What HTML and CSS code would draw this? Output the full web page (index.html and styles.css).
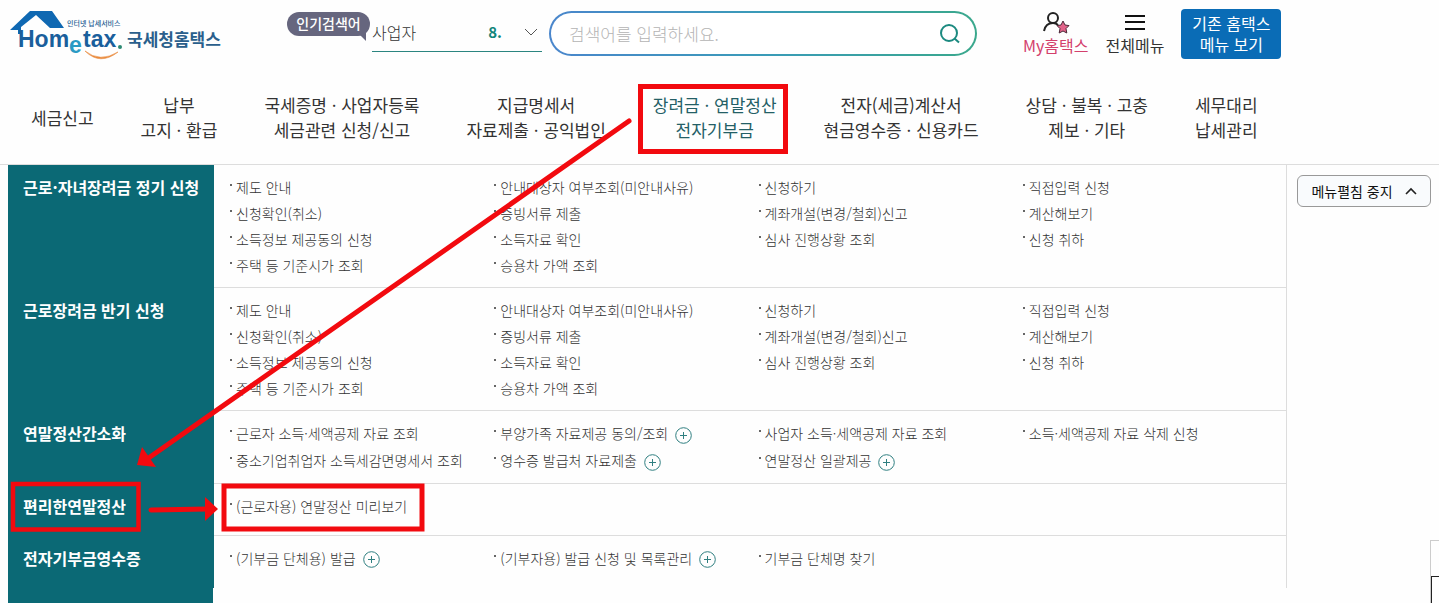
FILE: index.html
```
<!DOCTYPE html>
<html lang="ko">

<head>
  <meta charset="UTF-8" />
  <meta name="viewport" content="width=device-width, initial-scale=1.0" />
  <title>국세청 홈택스</title>
  <link rel="stylesheet" href="styles.css">
</head>

<body>
  <svg class="defs" width="0" height="0" aria-hidden="true">
    <symbol id="plus" viewBox="0 0 17 17">
      <circle cx="8.5" cy="8.5" r="7.8" fill="none" stroke="#2f7f80" />
      <path d="M5 8.5h7M8.5 5v7" fill="none" stroke="#2f7f80" />
    </symbol>
  </svg>

  <header class="header">
    <div class="top">
      <a href="#" class="logo" aria-label="Hometax 국세청홈택스">
        <svg width="212" height="54" viewBox="0 0 212 54">
          <path d="M1 21 L21 2 H43 L55 19 H41 L27 6 L12 18 V25 H9 V21 Z" fill="#0f68b2" />
          <text x="58" y="17" class="logo-sub">인터넷 납세서비스</text>
          <text x="9" y="38" class="logo-main">Hom</text>
          <text x="60" y="44" class="logo-main logo-e">e</text>
          <text x="74" y="38" class="logo-main">tax</text>
          <circle cx="111" cy="38" r="2" fill="#2c8a72" />
          <path d="M76 42 Q91 57 109 43 Q91 54 76 42 Z" fill="#e98a3c" stroke="#e98a3c" stroke-width=".6" />
          <text x="118" y="37" class="logo-kr">국세청홈택스</text>
        </svg>
      </a>
      <div class="keyword">
        <span class="keyword-badge">인기검색어</span>
        <button type="button" class="keyword-btn">
          <span>사업자</span>
          <span class="rank">8.</span>
          <svg width="14" height="8" viewBox="0 0 14 8"><path d="M1 1l6 6 6-6" fill="none" stroke="#555" /></svg>
        </button>
      </div>
      <form class="search">
        <input type="text" placeholder="검색어를 입력하세요." aria-label="검색어" />
        <button type="button" aria-label="검색">
          <svg width="22" height="22" viewBox="0 0 22 22" fill="none" stroke="#1c8a80" stroke-width="2">
            <circle cx="11" cy="10" r="8" /><path d="M16.5 15.5l4.500 4" />
          </svg>
        </button>
      </form>
      <div class="util">
        <a href="#" class="util-link my">
          <svg width="28" height="24" viewBox="0 0 28 24">
            <g fill="none" stroke="#222" stroke-width="2">
              <circle cx="11" cy="7" r="5" /><path d="M2 20c1-5 4-8 9-8 2 0 4 1 5 2" />
            </g>
            <path d="M21 10l2 4 4 .6-3 3 .8 4.4-3.8-2-3.8 2 .8-4.400-3-3 4-.6z" fill="#e2638a" stroke="#4b2938" stroke-width="1" />
          </svg>
          My홈택스
        </a>
        <a href="#" class="util-link">
          <svg width="22" height="24" viewBox="0 0 22 24"><path d="M1 5h20M1 11h20M1 18h20" stroke="#111" stroke-width="2" /></svg>
          전체메뉴
        </a>
        <button type="button" class="old-btn">기존 홈택스<br>메뉴 보기</button>
      </div>
    </div>

    <nav class="gnb">
      <a href="#">세금신고</a>
      <a href="#">납부<br>고지 · 환급</a>
      <a href="#">국세증명 · 사업자등록<br>세금관련 신청/신고</a>
      <a href="#">지급명세서<br>자료제출 · 공익법인</a>
      <a href="#" class="on">장려금 · 연말정산<br>전자기부금</a>
      <a href="#">전자(세금)계산서<br>현금영수증 · 신용카드</a>
      <a href="#">상담 · 불복 · 고충<br>제보 · 기타</a>
      <a href="#">세무대리<br>납세관리</a>
    </nav>
  </header>

  <main class="menu">
    <div class="panel">
      <section class="row">
        <h2>근로·자녀장려금 정기 신청</h2>
        <div class="lists">
          <ul>
            <li><a href="#">제도 안내</a></li>
            <li><a href="#">신청확인(취소)</a></li>
            <li><a href="#">소득정보 제공동의 신청</a></li>
            <li><a href="#">주택 등 기준시가 조회</a></li>
          </ul>
          <ul>
            <li><a href="#">안내대상자 여부조회(미안내사유)</a></li>
            <li><a href="#">증빙서류 제출</a></li>
            <li><a href="#">소득자료 확인</a></li>
            <li><a href="#">승용차 가액 조회</a></li>
          </ul>
          <ul>
            <li><a href="#">신청하기</a></li>
            <li><a href="#">계좌개설(변경/철회)신고</a></li>
            <li><a href="#">심사 진행상황 조회</a></li>
          </ul>
          <ul>
            <li><a href="#">직접입력 신청</a></li>
            <li><a href="#">계산해보기</a></li>
            <li><a href="#">신청 취하</a></li>
          </ul>
        </div>
      </section>
      <section class="row">
        <h2>근로장려금 반기 신청</h2>
        <div class="lists">
          <ul>
            <li><a href="#">제도 안내</a></li>
            <li><a href="#">신청확인(취소)</a></li>
            <li><a href="#">소득정보 제공동의 신청</a></li>
            <li><a href="#">주택 등 기준시가 조회</a></li>
          </ul>
          <ul>
            <li><a href="#">안내대상자 여부조회(미안내사유)</a></li>
            <li><a href="#">증빙서류 제출</a></li>
            <li><a href="#">소득자료 확인</a></li>
            <li><a href="#">승용차 가액 조회</a></li>
          </ul>
          <ul>
            <li><a href="#">신청하기</a></li>
            <li><a href="#">계좌개설(변경/철회)신고</a></li>
            <li><a href="#">심사 진행상황 조회</a></li>
          </ul>
          <ul>
            <li><a href="#">직접입력 신청</a></li>
            <li><a href="#">계산해보기</a></li>
            <li><a href="#">신청 취하</a></li>
          </ul>
        </div>
      </section>
      <section class="row row-tall">
        <h2>연말정산간소화</h2>
        <div class="lists">
          <ul>
            <li><a href="#">근로자 소득·세액공제 자료 조회</a></li>
            <li><a href="#">중소기업취업자 소득세감면명세서 조회</a></li>
          </ul>
          <ul>
            <li><a href="#">부양가족 자료제공 동의/조회</a><button type="button" class="more" aria-label="펼치기"><svg width="17" height="17"><use href="#plus" /></svg></button></li>
            <li><a href="#">영수증 발급처 자료제출</a><button type="button" class="more" aria-label="펼치기"><svg width="17" height="17"><use href="#plus" /></svg></button></li>
          </ul>
          <ul>
            <li><a href="#">사업자 소득·세액공제 자료 조회</a></li>
            <li><a href="#">연말정산 일괄제공</a><button type="button" class="more" aria-label="펼치기"><svg width="17" height="17"><use href="#plus" /></svg></button></li>
          </ul>
          <ul>
            <li><a href="#">소득·세액공제 자료 삭제 신청</a></li>
          </ul>
        </div>
      </section>
      <section class="row">
        <h2>편리한연말정산</h2>
        <div class="lists">
          <ul>
            <li><a href="#">(근로자용) 연말정산 미리보기</a></li>
          </ul>
        </div>
      </section>
      <section class="row">
        <h2>전자기부금영수증</h2>
        <div class="lists">
          <ul>
            <li><a href="#">(기부금 단체용) 발급</a><button type="button" class="more" aria-label="펼치기"><svg width="17" height="17"><use href="#plus" /></svg></button></li>
          </ul>
          <ul>
            <li><a href="#">(기부자용) 발급 신청 및 목록관리</a><button type="button" class="more" aria-label="펼치기"><svg width="17" height="17"><use href="#plus" /></svg></button></li>
          </ul>
          <ul>
            <li><a href="#">기부금 단체명 찾기</a></li>
          </ul>
        </div>
      </section>
      <div class="side-tail"></div>
    </div>
    <div class="fold">
      <button type="button" class="fold-btn">메뉴펼침 중지
        <svg width="12" height="8" viewBox="0 0 12 8"><path d="M1 7l5-5 5 5" fill="none" stroke="#222" stroke-width="1.600" /></svg>
      </button>
    </div>
  </main>

  <div class="quick"><div class="quick-inner"></div></div>

  <!-- guide marks over the menu -->
  <svg class="guide" width="1439" height="603" viewBox="0 0 1439 603" aria-hidden="true">
    <g fill="none" stroke="#f20a0f">
      <rect x="640.5" y="86.500" width="145" height="65" stroke-width="5" />
      <rect x="13" y="484" width="125.500" height="45.500" stroke-width="4.500" />
      <rect x="224" y="486" width="198" height="43" stroke-width="5" />
      <path d="M629 121L150 457" stroke-width="5" stroke-linecap="round" />
      <path d="M151 510L208 509" stroke-width="5" stroke-linecap="round" />
    </g>
    <path d="M137 465L142 447L156 467Z" fill="#f20a0f" />
    <path d="M205 497L218 509L205 521Z" fill="#f20a0f" />
  </svg>
</body>

</html>
```

FILE: styles.css
```
* {
  box-sizing: border-box;
}

body,
h2,
ul {
  margin: 0;
  padding: 0;
}

body {
  display: flex;
  flex-direction: column;
  min-height: 100vh;
  font-family: "Noto Sans CJK KR", "Noto Sans", sans-serif;
  color: #333;
  background: #fefefe;
}

a {
  color: inherit;
  text-decoration: none;
}

button,
input {
  font-family: inherit;
  color: inherit;
}

button {
  padding: 0;
  border: 0;
  background: none;
  cursor: pointer;
}

ul {
  list-style: none;
}

svg {
  display: block;
}

.defs,
.guide,
.quick {
  position: absolute;
}

/* header */
.header {
  border-bottom: 1px solid #ddd;
}

.top {
  display: flex;
  align-items: flex-start;
  padding: 9px 0 0 9px;
  height: 84px;
}

.logo-sub {
  font-size: 7px;
  font-weight: 500;
  fill: #2a5f94;
}

.logo-main {
  font-family: "Liberation Sans", sans-serif;
  font-size: 23px;
  font-weight: bold;
  fill: #1a5f9c;
}

.logo-e {
  fill: #2a9ac4;
}

.logo-kr {
  font-size: 17px;
  font-weight: bold;
  fill: #2a5f8c;
}

.keyword {
  display: flex;
  margin-left: 66px;
  padding-top: 3px;
}

.keyword-badge {
  position: relative;
  width: 83px;
  height: 24px;
  border-radius: 12px;
  background: #66667e;
  color: #fff;
  font-size: 14px;
  font-weight: 500;
  line-height: 23px;
  text-align: center;
}

.keyword-badge::after {
  content: "";
  position: absolute;
  right: 4px;
  bottom: -5px;
  border-top: 8px solid #66667e;
  border-left: 8px solid transparent;
}

.keyword-btn {
  display: flex;
  align-items: center;
  gap: 22px;
  width: 170px;
  height: 40px;
  margin-left: 2px;
  padding-right: 4px;
  border-bottom: 1px solid #2b8580;
  color: #333;
  font-size: 16px;
  font-weight: 300;
}

.rank {
  margin-left: auto;
  color: #12857a;
  font-size: 15px;
  font-weight: bold;
}

.search {
  display: flex;
  align-items: center;
  flex: 1;
  max-width: 428px;
  height: 45px;
  margin: 2px 0 0 7px;
  padding: 0 15px 0 18px;
  border: 2px solid transparent;
  border-radius: 23px;
  background: linear-gradient(#fff, #fff) padding-box, linear-gradient(90deg, #4a86cc, #3a9bb8 50%, #3aa88c) border-box;
}

.search input {
  flex: 1;
  min-width: 0;
  padding: 0;
  border: 0;
  outline: 0;
  background: none;
  font-size: 17px;
  font-weight: 300;
}

.search input::placeholder {
  color: #b4b4b4;
}

.util {
  display: flex;
  gap: 17px;
  margin-left: 46px;
}

.util-link {
  display: flex;
  flex-direction: column;
  align-items: center;
  padding-top: 2px;
  font-size: 16px;
  line-height: 21px;
}

.my {
  color: #d3406c;
}

.old-btn {
  width: 100px;
  height: 50px;
  border-radius: 4px;
  background: #0a6cb6;
  color: #fff;
  font-size: 16px;
  line-height: 21px;
}

.gnb {
  display: flex;
  align-items: center;
  gap: 47px;
  height: 80px;
  padding: 0 0 14px 31px;
  font-size: 17px;
  line-height: 25px;
  text-align: center;
  white-space: nowrap;
}

.gnb .on {
  color: #245f66;
}

/* menu */
.menu {
  display: flex;
  flex: 1;
  padding-left: 8px;
}

.panel {
  display: flex;
  flex-direction: column;
  flex: 1;
}

.row {
  display: flex;
  min-height: 52px;
  border-right: 1px solid #ddd;
}

.row h2 {
  width: 206px;
  padding: 8px 0 0 15px;
  background: #0b6975;
  color: #fff;
  font-size: 16px;
  font-weight: bold;
  line-height: 28px;
  white-space: nowrap;
}

.lists {
  display: grid;
  grid-template-columns: repeat(4, 1fr);
  flex: 1;
  padding: 9px 0 9px 15px;
  border-bottom: 1px solid #ddd;
  font-size: 14px;
  font-weight: 300;
  line-height: 26px;
  white-space: nowrap;
}

.row:nth-child(5) .lists {
  border-bottom: 0;
}

.row-tall .lists {
  line-height: 27px;
}

.lists li {
  display: flex;
}

.lists li::before {
  content: "";
  width: 2px;
  height: 2px;
  margin: 10px 4px 0 1px;
  background: #666;
}

.more {
  align-self: center;
  margin: 3px 0 0 7px;
}

.side-tail {
  flex: 1;
  width: 205px;
  background: #0b6975;
}

.fold {
  width: 152px;
  padding: 10px 8px 0 10px;
}

.fold-btn {
  display: flex;
  align-items: center;
  justify-content: center;
  gap: 12px;
  width: 100%;
  height: 32px;
  border: 1px solid #999;
  border-radius: 6px;
  background: #f9fbfd;
  color: #111;
  font-size: 14px;
}

.quick {
  right: 0;
  bottom: 0;
  width: 9px;
  height: 63px;
  padding-top: 35px;
  border: 1px solid #ccc;
  border-width: 1px 0 0 1px;
}

.quick-inner {
  height: 27px;
  border: 1px solid #222;
  border-width: 1px 0 0 1px;
}

.guide {
  top: 0;
  left: 0;
  pointer-events: none;
}
```
